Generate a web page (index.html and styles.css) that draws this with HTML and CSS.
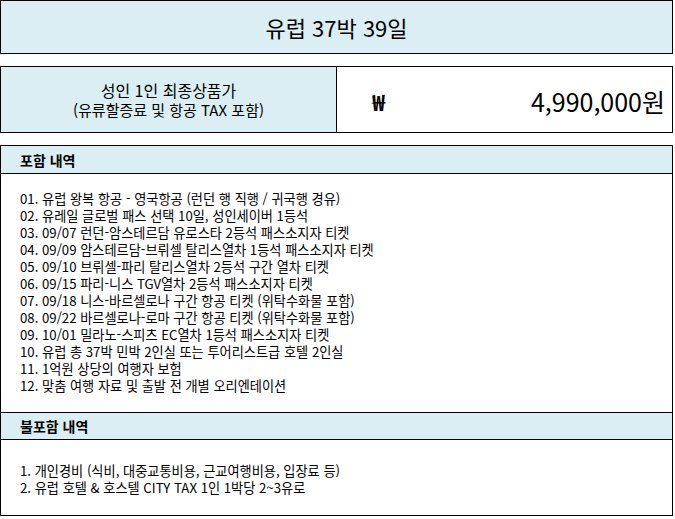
FILE: index.html
```html
<!DOCTYPE html>
<html lang="ko">
<head>
<meta charset="utf-8">
<link rel="stylesheet" href="styles.css">
</head>
<body>
<div class="sheet">
  <div class="title">유럽 37박 39일</div>
  <div class="price">
    <div class="price-label">
      <div class="pl1">성인 1인 최종상품가</div>
      <div class="pl2">(유류할증료 및 항공 TAX 포함)</div>
    </div>
    <div class="price-value">
      <span class="won">₩</span>
      <span class="amount">4,990,000원</span>
    </div>
  </div>
  <div class="box">
    <div class="head head-first">포함 내역</div>
    <ul class="list list-inc">
      <li>01. 유럽 왕복 항공 - 영국항공 (런던 행 직행 / 귀국행 경유)</li>
      <li>02. 유레일 글로벌 패스 선택 10일, 성인세이버 1등석</li>
      <li>03. 09/07 런던-암스테르담 유로스타 2등석 패스소지자 티켓</li>
      <li>04. 09/09 암스테르담-브뤼셀 탈리스열차 1등석 패스소지자 티켓</li>
      <li>05. 09/10 브뤼셀-파리 탈리스열차 2등석 구간 열차 티켓</li>
      <li>06. 09/15 파리-니스 TGV열차 2등석 패스소지자 티켓</li>
      <li>07. 09/18 니스-바르셀로나 구간 항공 티켓 (위탁수화물 포함)</li>
      <li>08. 09/22 바르셀로나-로마 구간 항공 티켓 (위탁수화물 포함)</li>
      <li>09. 10/01 밀라노-스피츠 EC열차 1등석 패스소지자 티켓</li>
      <li>10. 유럽 총 37박 민박 2인실 또는 투어리스트급 호텔 2인실</li>
      <li>11. 1억원 상당의 여행자 보험</li>
      <li>12. 맞춤 여행 자료 및 출발 전 개별 오리엔테이션</li>
    </ul>
    <div class="head">불포함 내역</div>
    <ul class="list list-exc">
      <li>1. 개인경비 (식비, 대중교통비용, 근교여행비용, 입장료 등)</li>
      <li>2. 유럽 호텔 &amp; 호스텔 CITY TAX 1인 1박당 2~3유로</li>
    </ul>
  </div>
</div>
</body>
</html>
```
FILE: styles.css
```css
* { box-sizing: border-box; }
html, body { margin: 0; padding: 0; background: #fff; }
body {
  font-family: "Noto Sans CJK KR", "Noto Sans", sans-serif;
  color: #000;
}
.sheet { width: 673px; display: flex; flex-direction: column; }
.title {
  height: 54px;
  border: 1px solid #000;
  background: #daeef3;
  display: flex;
  align-items: center;
  justify-content: center;
  font-size: 22px;
  line-height: 26px;
}
.price {
  margin-top: 12px;
  height: 67px;
  border: 1px solid #000;
  display: flex;
}
.price-label {
  width: 336px;
  border-right: 1px solid #000;
  background: #daeef3;
  display: flex;
  flex-direction: column;
  align-items: center;
  justify-content: center;
  line-height: 19px;
  padding-top: 1px;
}
.pl1 { font-size: 16px; }
.pl2 { font-size: 15px; }
.price-value {
  flex: 1;
  display: flex;
  align-items: center;
  justify-content: space-between;
  padding: 2px 7px 0 35px;
}
.won { font-size: 22px; font-weight: bold; }
.amount { font-size: 25px; }
.box {
  margin-top: 12px;
  border: 1px solid #000;
}
.head {
  height: 28px;
  background: #daeef3;
  border-bottom: 1px solid #000;
  display: flex;
  align-items: center;
  padding-left: 19px;
  font-size: 14px;
  font-weight: bold;
  border-top: 1px solid #000;
}
.head-first { border-top: none; }
.list {
  list-style: none;
  margin: 0;
  padding: 16px 0 0 19px;
  font-size: 13.2px;
  line-height: 17px;
}
.list-inc { height: 238px; }
.list-exc { height: 75px; padding-top: 22px; }
```
